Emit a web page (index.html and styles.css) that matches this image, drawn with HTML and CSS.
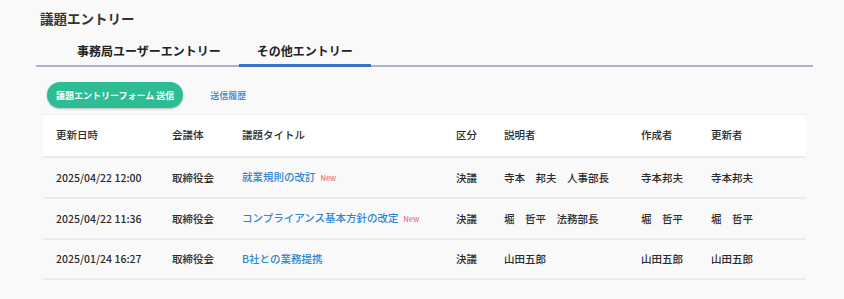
FILE: index.html
```html
<!DOCTYPE html>
<html lang="ja">
<head>
  <meta charset="UTF-8">
  <title>議題エントリー</title>
  <link rel="stylesheet" href="styles.css">
</head>
<body>
  <div class="page">
    <h1 class="page-title">議題エントリー</h1>

    <nav class="tabs">
      <a class="tab" href="#">事務局ユーザーエントリー</a>
      <a class="tab active" href="#">その他エントリー</a>
    </nav>

    <div class="actions">
      <button class="btn-send">議題エントリーフォーム 送信</button>
      <a class="history-link" href="#">送信履歴</a>
    </div>

    <table class="entries">
      <colgroup>
        <col class="c-date">
        <col class="c-body">
        <col class="c-title">
        <col class="c-kind">
        <col class="c-speaker">
        <col class="c-author">
        <col class="c-editor">
      </colgroup>
      <thead>
        <tr>
          <th>更新日時</th>
          <th>会議体</th>
          <th>議題タイトル</th>
          <th>区分</th>
          <th>説明者</th>
          <th>作成者</th>
          <th>更新者</th>
        </tr>
      </thead>
      <tbody>
        <tr>
          <td>2025/04/22 12:00</td>
          <td>取締役会</td>
          <td><a href="#">就業規則の改訂</a><span class="new">New</span></td>
          <td>決議</td>
          <td>寺本　邦夫　人事部長</td>
          <td>寺本邦夫</td>
          <td>寺本邦夫</td>
        </tr>
        <tr>
          <td>2025/04/22 11:36</td>
          <td>取締役会</td>
          <td><a href="#">コンプライアンス基本方針の改定</a><span class="new">New</span></td>
          <td>決議</td>
          <td>堀　哲平　法務部長</td>
          <td>堀　哲平</td>
          <td>堀　哲平</td>
        </tr>
        <tr>
          <td>2025/01/24 16:27</td>
          <td>取締役会</td>
          <td><a href="#">B社との業務提携</a></td>
          <td>決議</td>
          <td>山田五郎</td>
          <td>山田五郎</td>
          <td>山田五郎</td>
        </tr>
      </tbody>
    </table>
  </div>
</body>
</html>
```

FILE: styles.css
```css
body {
  margin: 0;
  background-color: #f9f9f9;
  color: #333;
  font-family: "Noto Sans CJK JP", "Noto Sans", sans-serif;
}
.page {
  padding: 0 31px 0 36px;
}
.page-title {
  margin: 0;
  padding: 8px 0 0 4px;
  font-size: 13.5px;
  line-height: 20px;
  font-weight: bold;
  color: #333;
}
.tabs {
  display: flex;
  margin-top: 15px;
  padding-left: 23px;
  border-bottom: 2px solid #a9b0d6;
}
.tab {
  padding: 0 18px 5px;
  margin-bottom: -2px;
  border-bottom: 3px solid transparent;
  font-size: 12px;
  line-height: 16px;
  font-weight: bold;
  color: #222;
  text-decoration: none;
}
.tab.active {
  border-bottom-color: #3a70c8;
}
.actions {
  display: flex;
  align-items: center;
  gap: 27px;
  margin-top: 15px;
  padding-left: 11px;
}
.btn-send {
  height: 26px;
  padding: 0 9px;
  border: none;
  border-radius: 13px;
  background-color: #2cbd94;
  color: #fff;
  font-family: inherit;
  font-size: 9px;
  font-weight: bold;
  box-shadow: 0 1px 2px rgba(0, 0, 0, 0.25);
  cursor: pointer;
}
.history-link {
  color: #2e86d1;
  font-size: 9px;
  font-weight: 500;
  text-decoration: none;
}
.entries {
  width: 763px;
  margin: 6px 0 0 7px;
  border-spacing: 0;
  border-top: 1px solid #eeeeee;
  table-layout: fixed;
  font-size: 10.5px;
  line-height: 16px;
  font-weight: 500;
  color: #2b2b2b;
}
.c-date { width: 116px; }
.c-body { width: 70px; }
.c-title { width: 214px; }
.c-kind { width: 48px; }
.c-speaker { width: 137px; }
.c-author { width: 70px; }
.c-editor { width: 108px; }
.entries th {
  background-color: #fff;
  padding: 12px 0 13px 13px;
  text-align: left;
  font-weight: 500;
  border-bottom: 2px solid #ebebeb;
  white-space: nowrap;
}
.entries td {
  padding: 11px 0 11px 13px;
  border-bottom: 2px solid #ebebeb;
  white-space: nowrap;
}
.entries td a {
  color: #2e86d1;
  text-decoration: none;
}
.new {
  margin-left: 5px;
  color: #e4576a;
  font-size: 7.5px;
  font-weight: normal;
}
```
